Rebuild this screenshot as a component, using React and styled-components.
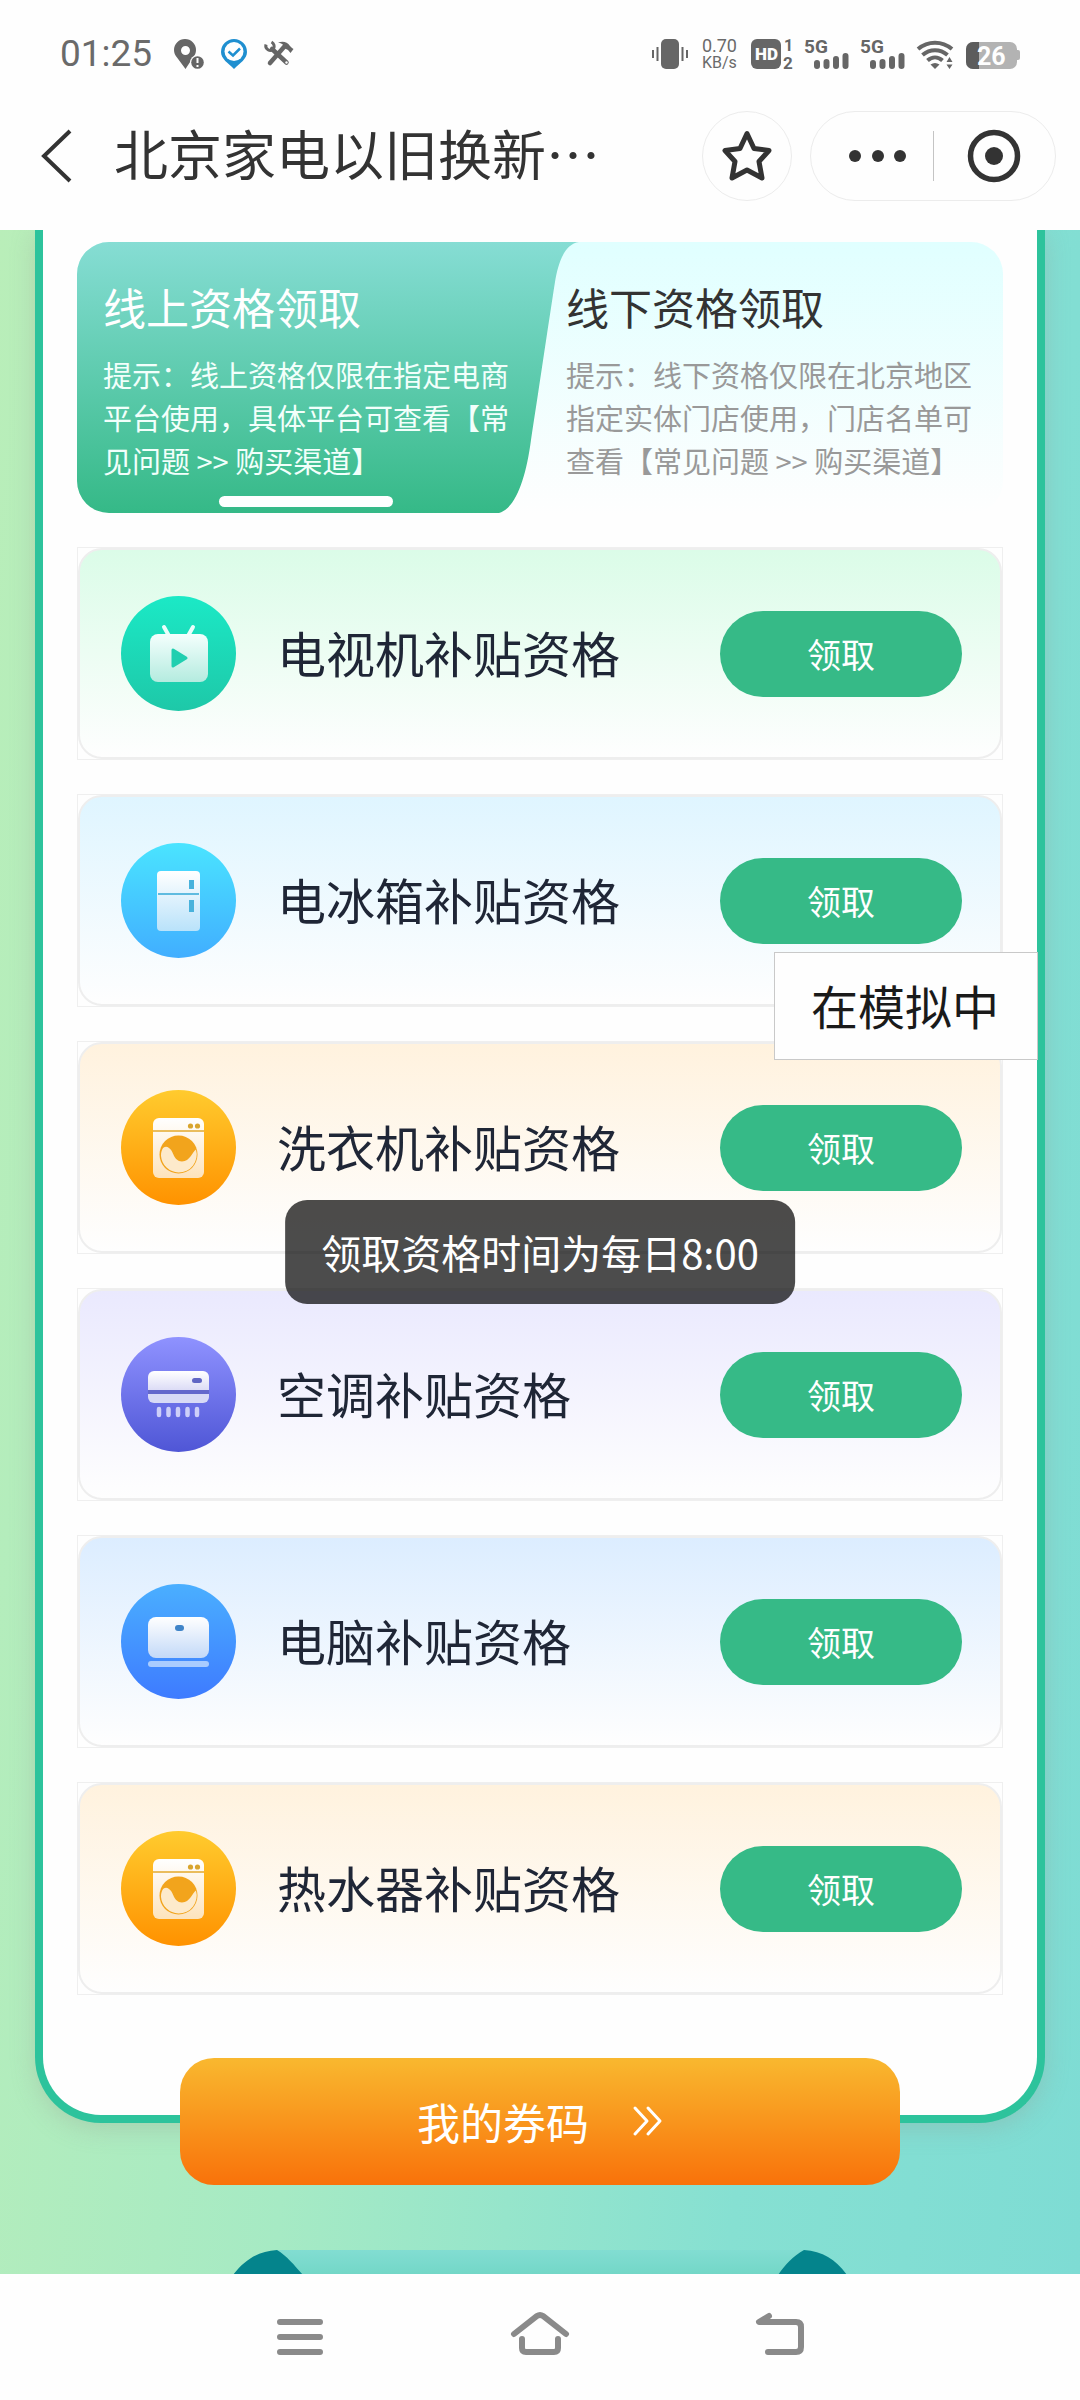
import React, { useState } from "react";
import styled, { createGlobalStyle } from "styled-components";

const GlobalStyle = createGlobalStyle`
  * {
    box-sizing: border-box;
  }
  body {
    margin: 0;
    background: #fefefe;
    font-family: "Noto Sans CJK SC", "Liberation Sans", sans-serif;
  }
  button {
    font-family: inherit;
    border: none;
    padding: 0;
    background: none;
    cursor: pointer;
  }
  svg {
    display: block;
    overflow: visible;
  }
`;

const tabs = [
  {
    id: "online",
    title: "线上资格领取",
    tip: "提示：线上资格仅限在指定电商平台使用，具体平台可查看【常见问题 >> 购买渠道】",
  },
  {
    id: "offline",
    title: "线下资格领取",
    tip: "提示：线下资格仅限在北京地区指定实体门店使用，门店名单可查看【常见问题 >> 购买渠道】",
  },
];

const TvIcon = () => (
  <svg width="115" height="115" viewBox="0 0 115 115">
    <defs>
      <linearGradient id="tv" x1="0" y1="0" x2="0" y2="1">
        <stop offset="0" stopColor="#f4fffd" />
        <stop offset="1" stopColor="#b4ebdf" />
      </linearGradient>
    </defs>
    <path d="M43 31L48 40M72 31L67 40" stroke="#e9fffb" strokeWidth="4" strokeLinecap="round" />
    <rect x="29" y="38" width="58" height="48" rx="8" fill="url(#tv)" />
    <path d="M52 54v16l13 -8z" fill="#20cfb0" stroke="#20cfb0" strokeWidth="3" strokeLinejoin="round" />
  </svg>
);

const FridgeIcon = () => (
  <svg width="115" height="115" viewBox="0 0 115 115">
    <defs>
      <linearGradient id="fridge" x1="0" y1="0" x2="0" y2="1">
        <stop offset="0" stopColor="#ffffff" />
        <stop offset="1" stopColor="#b9e2fa" />
      </linearGradient>
    </defs>
    <rect x="36" y="28" width="43" height="60" rx="4" fill="url(#fridge)" />
    <path d="M37 51h41" stroke="#5fbbe0" strokeWidth="2" />
    <path d="M70.5 37v9M70.5 57v12" stroke="#48b2dc" strokeWidth="5" />
  </svg>
);

const WasherIcon = ({ id }) => (
  <svg width="115" height="115" viewBox="0 0 115 115">
    <defs>
      <linearGradient id={id} x1="0" y1="0" x2="0" y2="1">
        <stop offset="0" stopColor="#ffffff" />
        <stop offset="1" stopColor="#fde3bc" />
      </linearGradient>
    </defs>
    <rect x="32" y="28" width="51" height="60" rx="6" fill={`url(#${id})`} />
    <path d="M32 41h51" stroke="#e3a92c" strokeWidth="1.5" />
    <circle cx="69.5" cy="36" r="2.6" fill="#d9a52e" />
    <circle cx="76.5" cy="36" r="2.6" fill="#d9a52e" />
    <circle cx="57.5" cy="64.5" r="19" fill="#f2a41c" />
    <path
      d="M40 66C40 58 44 55 48 58C53 61 52 71 61 71.5C69 71.5 71 62 75 59.5A18 18 0 0 1 57.5 82.5A18 18 0 0 1 40 66z"
      fill="#fdeacb"
    />
  </svg>
);

const AirIcon = () => (
  <svg width="115" height="115" viewBox="0 0 115 115">
    <defs>
      <linearGradient id="air" x1="0" y1="0" x2="0" y2="1">
        <stop offset="0" stopColor="#ffffff" />
        <stop offset="1" stopColor="#dcdcf6" />
      </linearGradient>
    </defs>
    <rect x="27" y="50" width="61" height="10" fill="#6468cc" />
    <path d="M27 53V40a6 6 0 0 1 6 -6h49a6 6 0 0 1 6 6v13z" fill="url(#air)" />
    <path d="M27 57h61v3a6 6 0 0 1 -6 6H33a6 6 0 0 1 -6 -6z" fill="#d8daf6" />
    <rect x="71" y="41" width="10" height="5" rx="2.5" fill="#6066c4" />
    <path
      d="M38 72v6M47.5 72v6M57 72v6M66.5 72v6M76 72v6"
      stroke="#cdcff9"
      strokeWidth="4.5"
      strokeLinecap="round"
    />
  </svg>
);

const LaptopIcon = () => (
  <svg width="115" height="115" viewBox="0 0 115 115">
    <defs>
      <linearGradient id="laptop" x1="0" y1="0" x2="0" y2="1">
        <stop offset="0" stopColor="#ffffff" />
        <stop offset="1" stopColor="#c3d9f8" />
      </linearGradient>
    </defs>
    <rect x="27" y="33" width="61" height="41" rx="8" fill="url(#laptop)" />
    <rect x="54" y="41" width="9" height="6" rx="3" fill="#3f84c8" />
    <rect x="27" y="77" width="61" height="6" rx="3" fill="#a9ccff" />
  </svg>
);

const goods = [
  { name: "电视机补贴资格", tint: "#dbfce8", from: "#1be9c6", to: "#1ec8a8", icon: <TvIcon /> },
  { name: "电冰箱补贴资格", tint: "#dff5ff", from: "#4ae4ff", to: "#41aeff", icon: <FridgeIcon /> },
  {
    name: "洗衣机补贴资格",
    tint: "#fff2de",
    from: "#ffcb2e",
    to: "#ff9200",
    icon: <WasherIcon id="washer" />,
  },
  { name: "空调补贴资格", tint: "#eae9fe", from: "#8f92ff", to: "#4f56d6", icon: <AirIcon /> },
  { name: "电脑补贴资格", tint: "#dcedff", from: "#4aafff", to: "#3e7bff", icon: <LaptopIcon /> },
  {
    name: "热水器补贴资格",
    tint: "#fff2de",
    from: "#ffcb2e",
    to: "#ff9200",
    icon: <WasherIcon id="heater" />,
  },
];

const SignalIcon = () => (
  <svg width="44" height="30" viewBox="0 0 44 30">
    <text x="-1" y="14" fontFamily="Roboto, sans-serif" fontWeight="700" fontSize="19" fill="#666">
      5G
    </text>
    <path d="M12 24v3M21.5 23v4M31 20v7M40.5 17v10" stroke="#666" strokeWidth="6" strokeLinecap="round" />
  </svg>
);

const StatusBar = () => (
  <StyledStatusBar>
    <StyledStatusGroup>
      <StyledTime>01:25</StyledTime>
      <StyledStatusIcons>
        <svg width="30" height="30" viewBox="0 0 30 30">
          <path
            fillRule="evenodd"
            d="M11 0a11 11 0 0 1 11 11c0 3 -1 5 -3 7.5L11.5 30L3 18.5C1 16 0 14 0 11A11 11 0 0 1 11 0zM11.5 7a4.5 4.5 0 1 0 0 9a4.5 4.5 0 1 0 0 -9z"
            fill="#666"
          />
          <circle cx="23.5" cy="23.5" r="7.5" fill="#fefefe" />
          <circle cx="23.5" cy="23.5" r="6.3" fill="#666" />
          <path d="M23.5 19v5M23.5 26v2" stroke="#fefefe" strokeWidth="2" />
        </svg>
        <svg width="26" height="30" viewBox="0 0 26 30">
          <path
            d="M13 0a13 13 0 0 1 13 13c0 7 -7 11 -13 17C7 24 0 20 0 13A13 13 0 0 1 13 0z"
            fill="#1f8fd0"
          />
          <circle cx="13" cy="12.5" r="9.5" fill="#fefefe" />
          <path d="M7.5 12.5l4.5 4l7 -7" fill="none" stroke="#1f8fd0" strokeWidth="2.5" />
        </svg>
        <svg width="30" height="26" viewBox="0 0 30 26">
          <path d="M8 8L22.5 21.5" stroke="#666" strokeWidth="4.5" strokeLinecap="round" />
          <path d="M20 6L6 22" stroke="#666" strokeWidth="4.5" strokeLinecap="round" />
          <path d="M2 3.5a4.500 4.500 0 0 0 7.500 4.500a5 5 0 0 0 -2 -7" fill="none" stroke="#666" strokeWidth="3" />
          <path d="M14 1.500c5 -1.500 9 -1 12 3.500l2 2l1.500 1l-3 4l-2.500 -3l-4 -2c0 -3 -2 -5 -6 -5.500z" fill="#666" />
          <circle cx="22.5" cy="21.5" r="1.2" fill="#fefefe" />
        </svg>
      </StyledStatusIcons>
    </StyledStatusGroup>
    <StyledStatusGroup>
      <svg width="36" height="30" viewBox="0 0 36 30">
        <rect x="9" y="0" width="18" height="30" rx="5" fill="#666" />
        <path d="M1 11v8M5.5 8v14M30.5 8v14M35 11v8" stroke="#666" strokeWidth="2" />
      </svg>
      <StyledSpeed>
        <span>0.70</span>
        <small>KB/s</small>
      </StyledSpeed>
      <svg width="42" height="30" viewBox="0 0 42 30">
        <rect width="30" height="30" rx="6" fill="#666" />
        <text x="4" y="21" fontFamily="Roboto, sans-serif" fontWeight="900" fontSize="17" fill="#fefefe">
          HD
        </text>
        <text x="33" y="12" fontFamily="Roboto, sans-serif" fontWeight="700" fontSize="16" fill="#666">
          1
        </text>
        <text x="32" y="30" fontFamily="Roboto, sans-serif" fontWeight="700" fontSize="17" fill="#666">
          2
        </text>
      </svg>
      <SignalIcon />
      <SignalIcon />
      <svg width="37" height="30" viewBox="0 0 37 30">
        <g fill="none" stroke="#666" strokeWidth="4">
          <path d="M1 10C11 1.500 25 1.500 35 10" />
          <path d="M5.5 16C13 9.500 23 9.500 30.5 16" />
          <path d="M10.5 21.5C15 17.500 21 17.500 25.5 21.5" />
        </g>
        <path d="M13.5 25.500q4.5 -3 9 0l-4.5 4.500z" fill="#666" />
        <path d="M29.5 23l3 -5l3 5zM29.500 25.500h6l-3 4.500z" fill="#666" />
      </svg>
      <svg width="54" height="30" viewBox="0 0 54 30">
        <rect x="49" y="11" width="5" height="10" rx="2" fill="#b3b3b3" />
        <rect x="0" y="3" width="51" height="27" rx="7" fill="#b3b3b3" />
        <path d="M13 3H7a7 7 0 0 0 -7 7v13a7 7 0 0 0 7 7h6z" fill="#5c5c5c" />
        <text x="11" y="26" fontFamily="Roboto, sans-serif" fontWeight="700" fontSize="25" fill="#fefefe">
          26
        </text>
      </svg>
    </StyledStatusGroup>
  </StyledStatusBar>
);

const TitleBar = () => (
  <StyledTitleBar>
    <StyledBackButton aria-label="返回">
      <svg width="34" height="54" viewBox="0 0 34 54">
        <path d="M30 2L4 27L30 52" fill="none" stroke="#333" strokeWidth="4" />
      </svg>
    </StyledBackButton>
    <StyledPageTitle>北京家电以旧换新…</StyledPageTitle>
    <StyledStarButton aria-label="收藏">
      <svg width="54" height="54" viewBox="0 0 54 54">
        <path
          d="M27 4.5L34 19.5L49 21.5L39 32.5L42 49L27 41L12 49L15 32.5L5 21.5L20 19.5z"
          fill="none"
          stroke="#333"
          strokeWidth="5"
          strokeLinejoin="round"
        />
      </svg>
    </StyledStarButton>
    <StyledCapsule>
      <StyledCapsuleButton aria-label="更多">
        <svg width="58" height="54" viewBox="0 0 58 54">
          <g fill="#333">
            <circle cx="6" cy="27" r="6" />
            <circle cx="29" cy="27" r="6" />
            <circle cx="51" cy="27" r="6" />
          </g>
        </svg>
      </StyledCapsuleButton>
      <StyledDivider />
      <StyledCapsuleButton aria-label="关闭">
        <svg width="54" height="54" viewBox="0 0 54 54">
          <circle cx="27" cy="27" r="23.5" fill="none" stroke="#333" strokeWidth="5.5" />
          <circle cx="27" cy="27" r="9" fill="#333" />
        </svg>
      </StyledCapsuleButton>
    </StyledCapsule>
  </StyledTitleBar>
);

const GoodsCard = ({ name, tint, from, to, icon }) => (
  <StyledCard>
    <StyledCardInner $tint={tint}>
      <StyledBadge $from={from} $to={to}>
        {icon}
      </StyledBadge>
      <StyledGoodsName>{name}</StyledGoodsName>
      <StyledReceiveButton>领取</StyledReceiveButton>
    </StyledCardInner>
  </StyledCard>
);

const App = () => {
  const [active, setActive] = useState("online");

  return (
    <StyledPage>
      <GlobalStyle />
      <StatusBar />
      <TitleBar />
      <StyledContent>
        <StyledPanel>
          <StyledTabs role="tablist">
            {tabs.map((tab) => (
              <StyledTab
                key={tab.id}
                role="tab"
                aria-selected={active === tab.id}
                $active={active === tab.id}
                $flip={tab.id === "offline"}
                onClick={() => setActive(tab.id)}
              >
                <StyledTabTitle>{tab.title}</StyledTabTitle>
                <StyledTabTip $active={active === tab.id}>{tab.tip}</StyledTabTip>
              </StyledTab>
            ))}
          </StyledTabs>
          <StyledList>
            {goods.map((item) => (
              <GoodsCard key={item.name} {...item} />
            ))}
          </StyledList>
        </StyledPanel>
        <StyledCouponButton>
          我的券码
          <svg width="30" height="30" viewBox="0 0 30 30">
            <path
              d="M2 2L14 15L2 28M15 2L27 15L15 28"
              fill="none"
              stroke="#fff"
              strokeWidth="3"
              strokeLinecap="round"
              strokeLinejoin="round"
            />
          </svg>
        </StyledCouponButton>
        <StyledNextHeading>
          <svg width="614" height="74" viewBox="0 0 614 74">
            <defs>
              <linearGradient id="ribbon" x1="0" y1="0" x2="0" y2="1">
                <stop offset="0" stopColor="#82ddd2" />
                <stop offset="1" stopColor="#54cbb0" />
              </linearGradient>
            </defs>
            <path d="M44 0H571L614 74H0z" fill="url(#ribbon)" />
            <path d="M0 25C12 9 26 1 44 0C54 6 62 16 70 25L110 74H-20z" fill="#04848c" />
            <path d="M614 25C603 10 590 1 571 0C559 7 552 15 545 25L505 74H634z" fill="#04848c" />
          </svg>
        </StyledNextHeading>
      </StyledContent>
      <StyledNav>
        <StyledNavButton aria-label="菜单">
          <svg width="60" height="50" viewBox="0 0 60 50">
            <path d="M10 10h40M10 25h40M10 40h40" stroke="#8a8a8a" strokeWidth="6" strokeLinecap="round" />
          </svg>
        </StyledNavButton>
        <StyledNavButton aria-label="主页">
          <svg width="60" height="50" viewBox="0 0 60 50">
            <path
              d="M4 22L27 4q3 -2 6 0L56 22M12 27v9q0 4 4 4h28q4 0 4 -4v-9"
              fill="none"
              stroke="#8a8a8a"
              strokeWidth="6"
              strokeLinecap="round"
            />
          </svg>
        </StyledNavButton>
        <StyledNavButton aria-label="后退">
          <svg width="60" height="50" viewBox="0 0 60 50">
            <path
              d="M19 4L9 10H46q5 0 5 5v20q0 5 -5 5H18"
              fill="none"
              stroke="#8a8a8a"
              strokeWidth="6"
              strokeLinecap="round"
              strokeLinejoin="round"
            />
          </svg>
        </StyledNavButton>
      </StyledNav>
      <StyledFloatLabel>在模拟中</StyledFloatLabel>
      <StyledToast role="status">领取资格时间为每日8:00</StyledToast>
    </StyledPage>
  );
};

export default App;

const StyledPage = styled.div`
  position: relative;
  display: flex;
  flex-direction: column;
  height: 100vh;
  overflow: hidden;
`;

const StyledStatusBar = styled.header`
  display: flex;
  justify-content: space-between;
  align-items: center;
  height: 108px;
  padding: 0 60px;
  flex-shrink: 0;
`;

const StyledStatusGroup = styled.div`
  display: flex;
  align-items: center;
  gap: 12px;
`;

const StyledStatusIcons = styled.div`
  display: flex;
  align-items: center;
  gap: 17px;
  margin-left: 10px;
`;

const StyledTime = styled.time`
  font-family: Roboto, sans-serif;
  font-size: 37px;
  line-height: 44px;
  color: #6a6a6a;
`;

const StyledSpeed = styled.div`
  display: flex;
  flex-direction: column;
  align-items: center;
  padding: 0 2px;
  font-family: Roboto, sans-serif;
  font-size: 18px;
  line-height: 17px;
  color: #6a6a6a;

  small {
    font-size: 16px;
  }
`;

const StyledTitleBar = styled.div`
  display: flex;
  align-items: center;
  height: 122px;
  padding: 0 24px 26px 40px;
  flex-shrink: 0;
`;

const StyledBackButton = styled.button`
  margin-right: 40px;
`;

const StyledPageTitle = styled.h1`
  flex: 1;
  margin: 0;
  padding-bottom: 6px;
  font-size: 54px;
  font-weight: 400;
  line-height: 80px;
  color: #333;
  white-space: nowrap;
`;

const StyledStarButton = styled.button`
  display: flex;
  align-items: center;
  justify-content: center;
  width: 90px;
  height: 90px;
  margin-right: 18px;
  border: 1px solid #ececec;
  border-radius: 50%;
`;

const StyledCapsule = styled.div`
  display: flex;
  align-items: center;
  width: 246px;
  height: 90px;
  border: 1px solid #ececec;
  border-radius: 45px;
`;

const StyledCapsuleButton = styled.button`
  display: flex;
  align-items: center;
  justify-content: center;
  width: 50%;
  height: 90px;

  &:first-child {
    padding-left: 12px;
  }
`;

const StyledDivider = styled.span`
  width: 1px;
  height: 50px;
  background: #c4c4c4;
`;

const StyledContent = styled.main`
  display: flex;
  flex-direction: column;
  align-items: center;
  flex: 1;
  min-height: 0;
  padding: 0 35px;
  overflow: hidden;
  background: linear-gradient(95deg, #b9eeb9 0%, #a6eac4 36%, #86e0d2 72%, #7edcd4 100%);
`;

const StyledPanel = styled.section`
  width: 100%;
  flex-shrink: 0;
  padding: 12px 34px 120px;
  border: 8px solid #2dc39c;
  border-top: none;
  border-radius: 0 0 66px 66px;
  background: #fefefe;
  box-shadow: 0 6px 24px rgba(150, 150, 140, 0.3);
`;

const StyledTabs = styled.div`
  display: flex;
  height: 271px;
  margin-bottom: 34px;
  border-radius: 32px;
  background: linear-gradient(#e0ffff, #fefefe);
`;

const StyledTab = styled.button`
  position: relative;
  z-index: 0;
  flex: 1;
  display: flex;
  flex-direction: column;
  align-items: flex-start;
  gap: 16px;
  padding: 33px 26px 0;
  text-align: left;
  color: ${({ $active }) => ($active ? "#fff" : "#333")};

  &::before {
    content: "";
    display: ${({ $active }) => ($active ? "block" : "none")};
    position: absolute;
    z-index: -1;
    inset: 0 -40px 0 0;
    background: linear-gradient(#86ddd4, #35b987);
    clip-path: path(
      "M32 0H502C487 2 481 22 478 40C472 78 460 160 454 198C449 236 439 266 422 271H32A32 32 0 0 1 0 239V32A32 32 0 0 1 32 0Z"
    );
    ${({ $flip }) => $flip && "inset: 0 0 0 -40px; transform: rotate(180deg);"}
  }

  &::after {
    content: "";
    display: ${({ $active }) => ($active ? "block" : "none")};
    position: absolute;
    bottom: 6px;
    left: 50%;
    width: 174px;
    height: 11px;
    margin-left: -90px;
    border-radius: 6px;
    background: #fff;
  }
`;

const StyledTabTitle = styled.span`
  font-size: 43px;
  line-height: 62px;
`;

const StyledTabTip = styled.span`
  font-size: 29px;
  line-height: 43px;
  color: ${({ $active }) => ($active ? "#f2fffb" : "#999")};
`;

const StyledList = styled.ul`
  display: flex;
  flex-direction: column;
  gap: 34px;
  margin: 0;
  padding: 0;
  list-style: none;
`;

const StyledCard = styled.li`
  height: 213px;
  border: 1px solid #efefef;
`;

const StyledCardInner = styled.div`
  display: flex;
  align-items: center;
  height: 100%;
  padding: 0 38px 0 41px;
  border: 2px solid #eee;
  border-radius: 24px;
  background: linear-gradient(${({ $tint }) => $tint}, #fefefe);
`;

const StyledBadge = styled.span`
  width: 115px;
  height: 115px;
  border-radius: 50%;
  background: linear-gradient(${({ $from, $to }) => `${$from}, ${$to}`});
`;

const StyledGoodsName = styled.span`
  flex: 1;
  margin-left: 41px;
  padding-bottom: 4px;
  font-size: 49px;
  line-height: 72px;
  color: #1f2636;
`;

const StyledReceiveButton = styled.button`
  width: 242px;
  height: 86px;
  border-radius: 43px;
  background: #36ba87;
  font-size: 34px;
  color: #fff;
`;

/* sits half over the lower edge of the panel */
const StyledCouponButton = styled.button`
  position: relative;
  display: flex;
  align-items: center;
  justify-content: center;
  gap: 44px;
  flex-shrink: 0;
  width: 720px;
  height: 127px;
  margin-top: -65px;
  padding-bottom: 2px;
  border-radius: 34px;
  background: linear-gradient(#f9b82f, #f9720a);
  font-size: 43px;
  color: #fff;
`;

const StyledNextHeading = styled.div`
  flex-shrink: 0;
  margin-top: 65px;
`;

const StyledNav = styled.nav`
  position: relative;
  display: flex;
  justify-content: center;
  gap: 180px;
  height: 126px;
  padding-top: 38px;
  flex-shrink: 0;
`;

const StyledNavButton = styled.button`
  width: 60px;
  height: 50px;
`;

const StyledFloatLabel = styled.div`
  position: absolute;
  top: 952px;
  right: 42px;
  padding: 18px 38px 20px 36px;
  border: 1px solid #c9c9c9;
  background: #fefefe;
  font-size: 47px;
  line-height: 68px;
  color: #1a1a1a;
`;

const StyledToast = styled.div`
  position: absolute;
  top: 50%;
  left: 50%;
  transform: translateX(-50%);
  padding: 22px 36px;
  border-radius: 22px;
  background: rgba(0, 0, 0, 0.7);
  font-size: 40px;
  line-height: 60px;
  color: #fff;
  white-space: nowrap;
`;
